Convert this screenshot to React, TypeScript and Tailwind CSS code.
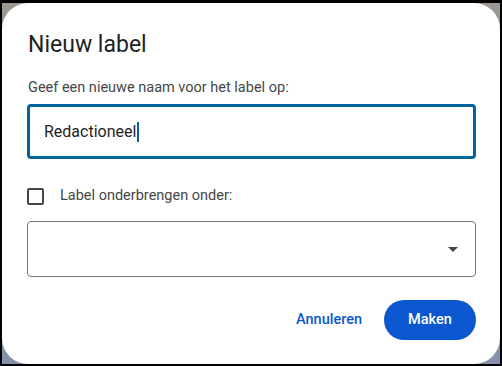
export default function App() {
  return (
    <div className="w-[502px] h-[366px] bg-black pt-[3px] px-[2px] pb-[2px] font-['Roboto',sans-serif]">
      <div className="h-full w-full bg-gradient-to-b from-[#9c9790] to-[#8592ab]">
        <div className="h-full w-full bg-white rounded-[26px] pl-[25px] pr-[24px] pt-[28px]">
          <h1 className="ml-[1px] text-[23px] leading-[28px] text-[#1f1f1f]">Nieuw label</h1>

          <p className="ml-[1px] mt-[19px] text-[14.5px] leading-[20px] text-[#444746]">
            Geef een nieuwe naam voor het label op:
          </p>

          <div className="mt-[6px] h-[55px] rounded-[4px] border-[3px] border-[#00639b] flex items-center pl-[14px]">
            <span className="text-[16px] text-[#1f1f1f]">Redactioneel</span>
            <span className="ml-[1px] w-[1.5px] h-[20px] bg-[#00639b]" />
          </div>

          <label className="mt-[27px] flex items-center gap-[16px]">
            <span className="w-[17px] h-[17px] rounded-[2px] border-2 border-[#444746]" />
            <span className="text-[14.5px] leading-[20px] text-[#444746]">Label onderbrengen onder:</span>
          </label>

          <div className="mt-[15px] h-[56px] rounded-[4px] border border-[#747775] flex items-center justify-end pr-[17px]">
            <svg width="10" height="5" viewBox="0 0 10 5">
              <path d="M0 0 L10 0 L5 5 Z" fill="#444746" />
            </svg>
          </div>

          <div className="mt-[23px] flex items-center justify-end gap-[20px]">
            <button className="px-[2px] h-[40px] text-[14.5px] font-medium text-[#0b57d0]">Annuleren</button>
            <button className="h-[40px] w-[92px] rounded-full bg-[#0b57d0] text-[14.5px] font-medium text-white">
              Maken
            </button>
          </div>
        </div>
      </div>
    </div>
  );
}
